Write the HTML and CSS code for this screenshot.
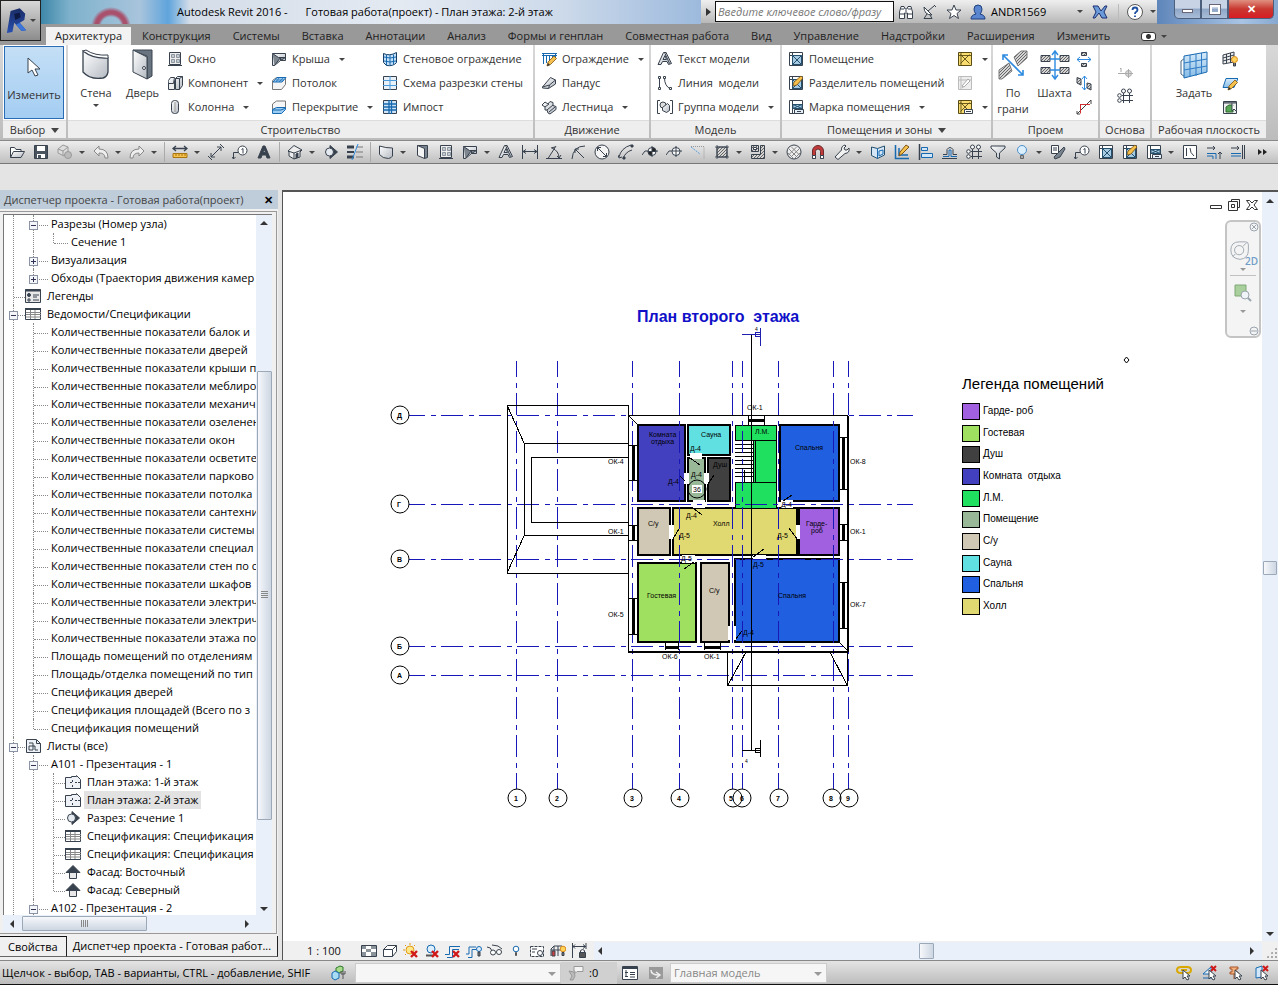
FILE: index.html
```html
<!DOCTYPE html>
<html lang="ru">
<head>
  <meta charset="UTF-8">
  <meta name="viewport" content="width=device-width, initial-scale=1.0">
  <title>Autodesk Revit 2016</title>
  <link rel="stylesheet" href="styles.css">
</head>
<body>

  <!-- Icon sprite -->
  <svg class="sprite" aria-hidden="true">
    <defs>
      <linearGradient id="steel" x1="0" y1="0" x2="1" y2="1"><stop offset="0" stop-color="#fff"/><stop offset="1" stop-color="#b4bac2"/></linearGradient>
      <linearGradient id="navy" x1="0" y1="0" x2="0" y2="1"><stop offset="0" stop-color="#1a2c66"/><stop offset="1" stop-color="#2850b0"/></linearGradient>
      <linearGradient id="sky" x1="0" y1="0" x2="0" y2="1"><stop offset="0" stop-color="#d8ecfa"/><stop offset="1" stop-color="#86bbe6"/></linearGradient>
      <pattern id="hatch" width="3" height="3" patternUnits="userSpaceOnUse"><path d="M0 0h3v3H0z" fill="#d4d4d4" stroke="none"/><path d="M0 3L3 0" stroke="#666" stroke-width="1"/></pattern>
    </defs>
    <symbol id="cursor" viewBox="0 0 16 22"><path d="M2 2v15l4-3 3 6 3-1-3-6h5z" fill="#fff"/></symbol>
    <symbol id="pointer" viewBox="0 0 16 16"><path d="M7 5v9l2-2 2 3 2-1-2-3h3z" fill="#fff"/></symbol>
    <symbol id="bigwall" viewBox="0 0 30 32"><path d="M2 2q10 8 25 7v14q-1 5-5 6Q9 31 2 23z" fill="url(#steel)" stroke-width="1.300"/><path d="M2 2l3-1q9 6 22 5v3" fill="#fff"/></symbol>
    <symbol id="bigdoor" viewBox="0 0 24 32"><path d="M2 1h19v26l-5 3V7L3 2z" fill="#687480"/><path d="M2 1l14 7v22L2 23z" fill="url(#steel)"/><circle cx="13" cy="19" r="1.500" fill="#fff"/></symbol>
    <symbol id="window" viewBox="0 0 16 16"><path d="M2.500 1.500h11v12h-11z" fill="#eee"/><path d="M4.500 3.500h3v3h-3zM9.500 3.500h3v3h-3zM4.500 8.500h3v3h-3zM9.500 8.500h3v3h-3z" fill="#c4ccd4" stroke="#7a848e" stroke-width=".8"/><path d="M1 14.500h14"/></symbol>
    <symbol id="component" viewBox="0 0 16 16"><path d="M1.500 5.500h6v9h-6z" fill="#eee"/><path d="M1.500 5.500l2-3h4l-1 6H2M8.500 3.500l2-2h5v9l-3 4h-4z" fill="url(#steel)"/><path d="M8.500 3.500h4v11M12.500 3.500l3-2"/></symbol>
    <symbol id="column" viewBox="0 0 16 16"><rect x="4.500" y="1.500" width="7" height="13" rx="3" fill="url(#steel)"/><path d="M8 3v10" stroke="#999"/></symbol>
    <symbol id="roof" viewBox="0 0 16 16"><path d="M1.500 2.500h13v7h-5l-6 5h-2z" fill="url(#steel)"/><path d="M1.500 2.500l6 4h7l-5 3v-3l-6 8" fill="#7d868f"/></symbol>
    <symbol id="ceiling" viewBox="0 0 16 16"><path d="M1.500 14.500v-9l4-3h9v7l-4 5z" fill="#f4f4f4" stroke="#777"/><path d="M2 7l4-4.500h9L11 7z" fill="#9cccf2" stroke="#1769b0"/><path d="M5 5h8M8 3L5 7M12 3L8 7" stroke="#1769b0" stroke-width=".7"/></symbol>
    <symbol id="floor" viewBox="0 0 16 16"><path d="M1.500 11V5l4-3h9v7" fill="#f6f6f6" stroke="#777"/><path d="M1.500 14.500v-4l4-2h9v2l-4 4z" fill="#9cccf2" stroke="#1769b0"/><path d="M2 11h8l5-2" stroke="#1769b0"/></symbol>
    <symbol id="curtain" viewBox="0 0 16 16"><path d="M1.500 2.500q6 3 13-1v10q-3 4-10 3l-3-3z" fill="#c4e0f6" stroke="#153e66"/><path d="M4.500 4v10.500M8 4v10.500M11.500 3.500v10M2 6q6 2 12 0M2 10q6 2 12 0" stroke="#1769b0"/></symbol>
    <symbol id="curtaingrid" viewBox="0 0 16 16"><path d="M1.500 1.500h13v13h-13z" fill="#e8f0f8"/><path d="M8 1v14M1 5.500h14M1 10.500h14" stroke="#4b9bdc"/></symbol>
    <symbol id="mullion" viewBox="0 0 16 16"><path d="M1.500 1.500h13v13h-13z" fill="#cfe4f6"/><path d="M7 1v14M9.500 1v14M1 5h14M1 8h14M1 11h14" stroke="#1769b0" stroke-width="1.300"/></symbol>
    <symbol id="pencil" viewBox="0 0 16 16"><path d="M6 15l1-4 6-6 2.500 2.500-6 6z" fill="#f6c04c" stroke="#7d5312" stroke-width=".8"/><path d="M6 15l1-3 2 2z" fill="#333" stroke="none"/></symbol>
    <symbol id="railing" viewBox="0 0 16 16"><path d="M1 2.500h15M1 4.500h15M2.500 2v11M5.500 4v8M8.500 4v8M11.500 4v4M14.500 2v5" stroke="#1769b0"/><use href="#pencil"/></symbol>
    <symbol id="ramp" viewBox="0 0 16 16"><path d="M1.500 12l8-9.500 5 2.500v4l-7 4.500-6-.5z" fill="url(#steel)"/><path d="M1.500 12l7-2 6-5M8.500 10l-1 3.500"/></symbol>
    <symbol id="stair" viewBox="0 0 16 16"><path d="M1 6l3-3 3 2 2-2.500 3 1v3l3 1v3l-6 4.500-2-1-1-3H4V8z" fill="url(#steel)"/><path d="M4 8l4-3M6 11l6-5M8 13l6-5"/></symbol>
    <symbol id="mtext" viewBox="0 0 16 16"><path d="M1 13.500L6.500 1.500H9l5.500 11-3 1-1.500-3H5.500l-1.500 3z" fill="url(#steel)"/><path d="M6 8.500l2-4 1.500 4zM9 1.500l-1 1 4.500 10"/></symbol>
    <symbol id="mline" viewBox="0 0 16 16"><path d="M2.500 3v10M7.500 3q0 8 6 11"/><path d="M1.500 1.500h2v2h-2zM1.500 12.500h2v2h-2zM6.500 1.500h2v2h-2zM12.500 12.500h2v2h-2z" fill="#fff"/></symbol>
    <symbol id="mgroup" viewBox="0 0 16 16"><path d="M3 1.500H.5v13H3M13 1.500h2.500v13H13"/><circle cx="6" cy="6" r="3" fill="#ddd"/><path d="M5.500 8.500l5-4 2 2v5l-3 2-4-2z" fill="url(#steel)"/></symbol>
    <symbol id="room" viewBox="0 0 16 16"><path d="M1.500 14.500v-13h13v13zM4.500 1.500v3M1.500 4.500h3M4.500 7v7" fill="#fff"/><path d="M4.500 4.500h9v9h-9zM4.500 4.500l9 9M13.500 4.500l-9 9" fill="#a8cbe4" stroke="#24506e"/></symbol>
    <symbol id="roomsep" viewBox="0 0 16 16"><use href="#room"/><path d="M5 11l1-4 7-6 2 2-6 7z" fill="#f6c04c" stroke="#7d5312" stroke-width=".8"/></symbol>
    <symbol id="roomtag" viewBox="0 0 16 16"><path d="M1.500 14.500v-13h13v13zM4.500 1.500v13" fill="#fff"/><path d="M5 5.500h9v4H5zM5 5.500l9 4M14 5.500l-9 4" fill="#a8cbe4" stroke="#24506e"/><path d="M6.500 10.500h9v4h-9z" fill="#e4eef6"/><path d="M9 12.500h4"/></symbol>
    <symbol id="area" viewBox="0 0 16 16"><path d="M1.500 1.500h13v13h-13z" fill="#f8dc70" stroke="#5a4c14"/><path d="M3.500 3.500l9 9M12.500 3.500l-9 9M1 4.500h14M4 1v14" stroke="#5a4c14" stroke-width=".9"/></symbol>
    <symbol id="areasep" viewBox="0 0 16 16"><path d="M1.500 1.500h13v13h-13zM4 1v14M1 5h14M5 13l8-8" stroke="#bbb" fill="#eee"/><path d="M5 11l6-7 2 2-6 6z" stroke="#aaa" fill="#fff"/></symbol>
    <symbol id="areatag" viewBox="0 0 16 16"><use href="#area"/><path d="M7.500 10.500h8v4h-8z" fill="#fff"/><path d="M9 12.500h5"/></symbol>
    <symbol id="byface" viewBox="0 0 30 30"><path d="M1 20L11 13l3 8-10 8H1z" fill="url(#hatch)" stroke="#777"/><path d="M16 7l7-6h6v7l-9 8z" fill="url(#hatch)" stroke="#777"/><path d="M5 5l20 20M5 10V5h5M20 25h5v-5" stroke="#2e8be0" stroke-width="1.600"/></symbol>
    <symbol id="shaft" viewBox="0 0 30 30"><path d="M1 5.500h9v6H1zM20 5.500h9v6h-9zM1 17.500h9v6H1zM20 17.500h9v6h-9z" fill="url(#hatch)"/><path d="M15 1v28M12 5l3-4 3 4M12 25l3 4 3-4M10 9h10M10 20h10" stroke="#2e8be0" stroke-width="1.400"/></symbol>
    <symbol id="opwall" viewBox="0 0 16 16"><path d="M5.500 1.500h5v3h-5zM5.500 12.500h5v3h-5z" fill="url(#hatch)"/><path d="M1 8.500h14M4 6L1 8.500 4 11M12 6l3 2.500-3 2.500" stroke="#2e8be0"/></symbol>
    <symbol id="opvert" viewBox="0 0 16 16"><path d="M1 2.500l4 1.500v6L1 8zM11 8l4 1v6l-4-2z" fill="url(#hatch)"/><path d="M8.500 1v14M6 4l2.500-3L11 4M6 12l2.500 3 2.500-3" stroke="#2e8be0"/></symbol>
    <symbol id="dormer" viewBox="0 0 16 16"><path d="M1 15L15 1M15 5v-4M1 12v3h3" stroke="#444"/><path d="M4 5.500h10M4.500 5.500v9" stroke="#d03030"/></symbol>
    <symbol id="level" viewBox="0 0 16 16"><path d="M1 9.500h7M3 5l1-1v4" stroke="#aaa"/><circle cx="11.500" cy="9.500" r="3" stroke="#aaa" fill="#ddd"/><path d="M11.500 5v9M7 9.500h9" stroke="#aaa"/></symbol>
    <symbol id="grid" viewBox="0 0 16 16"><path d="M6.500 5v10M12.500 5v10M5 7.500h11M5 12.500h11"/><circle cx="6.500" cy="3" r="2" fill="#fff"/><circle cx="12.500" cy="3" r="2" fill="#fff"/><circle cx="2.500" cy="7.500" r="1.800" fill="#fff"/><circle cx="2.500" cy="12.500" r="1.800" fill="#fff"/></symbol>
    <symbol id="set" viewBox="0 0 30 30"><path d="M2 11l4-3v19l-4-3z" fill="#fff" stroke="#49657f"/><path d="M5 6l23-4v20L5 28z" fill="url(#sky)" stroke="#1769b0"/><path d="M11 5v22M17 4v22M22.500 3v20M5 13l23-4M5 20l23-4" stroke="#2e7bc4"/></symbol>
    <symbol id="show" viewBox="0 0 16 16"><path d="M1 4l11-3v10L1 13zM4.500 3v9M8.500 2v10M1 7l11-3M1 10l11-3" fill="#eee"/><circle cx="12.500" cy="8.500" r="3" fill="#ffd35c" stroke="#d88a18"/><path d="M11.500 12v3h2v-3" fill="#777"/></symbol>
    <symbol id="refplane" viewBox="0 0 16 16"><path d="M4 3.500h12l-4 9H1z" fill="url(#sky)" stroke="#1769b0"/><use href="#pencil"/></symbol>
    <symbol id="viewer" viewBox="0 0 16 16"><path d="M1.500 2.500h13v12h-13z" fill="#eee"/><path d="M2 4h12M2 3h12"/><path d="M4 8l3-2h4v7H4z" fill="#58a858" stroke="#2d6a2d"/><path d="M10 4v8l2-2 3 3" fill="#fff"/></symbol>

    <symbol id="open" viewBox="0 0 16 16"><path d="M1.500 13.500v-10h4l1.500 2h5v2" fill="#fff"/><path d="M1.500 13.500l3-6h11l-3.500 6z" fill="url(#steel)"/></symbol>
    <symbol id="save" viewBox="0 0 16 16"><path d="M1.500 1.500h13v13h-13z" fill="#4a545e"/><path d="M4 2h8v5H4zM4 10h8v4H4z" fill="#fff" stroke="none"/><path d="M5 11h3v3H5z" fill="#4a545e" stroke="none"/></symbol>
    <symbol id="sync" viewBox="0 0 16 16"><path d="M1 5l5-4 5 2v5L7 12 1 9zM1 5l5 2 5-4M6 7v5" stroke="#999" fill="#ddd"/><circle cx="11" cy="11" r="3.500" fill="#bbb" stroke="#999"/></symbol>
    <symbol id="undo" viewBox="0 0 16 16"><path d="M1 7l5-5v3q9 0 9 9h-3q0-5-6-5v3z" fill="#eee" stroke="#888"/></symbol>
    <symbol id="redo" viewBox="0 0 16 16"><path d="M15 7l-5-5v3Q1 5 1 14h3q0-5 6-5v3z" fill="#eee" stroke="#888"/></symbol>
    <symbol id="measure" viewBox="0 0 16 16"><path d="M1 4.500h14M4 2L1 4.500 4 7M12 2l3 2.500L12 7" stroke-width="1.300"/><path d="M1 9.500h14v4H1z" fill="#f6c34c" stroke="#a87410"/><path d="M4 10v2M7 10v2M10 10v2M13 10v2" stroke="#a87410"/></symbol>
    <symbol id="dim" viewBox="0 0 16 16"><path d="M3 13L13 3M9 3h4v4M3 9v4h4M12 0l4 4M0 12l4 4"/></symbol>
    <symbol id="tag" viewBox="0 0 16 16"><path d="M1.500 15V8.500h5M0 13l1.500 2 2-2"/><circle cx="10.500" cy="6.500" r="4.500" fill="#fff"/><path d="M9.500 5.500l1.500-1v5"/></symbol>
    <symbol id="bold-a" viewBox="0 0 16 16"><path d="M2 14L7 2h2l5 12h-3l-1-3H6l-1 3zM7 8.500h2.500L8 5z" fill="#38424e" fill-rule="evenodd"/></symbol>
    <symbol id="home" viewBox="0 0 16 16"><path d="M1 7l6-5.500 8 4.500-2 2v5l-6 2-5-3V8z" fill="#eee"/><path d="M1 7l6 2 8-3M7 9v6"/><path d="M9 10l2-1v4l-2 1z" fill="#38424e"/></symbol>
    <symbol id="section" viewBox="0 0 16 16"><path d="M7 1.500L14.500 8 7 14.500z" fill="#38424e"/><circle cx="6.500" cy="8" r="4" fill="#e4eaf0"/></symbol>
    <symbol id="thin" viewBox="0 0 16 16"><path d="M0 3h7M0 13h7" stroke-width="3"/><path d="M0 8h7" stroke-width="2"/><path d="M9 3h7M9 8h7M9 13h7" stroke="#777"/><path d="M11 0L5 16" stroke="#2e8be0"/></symbol>
    <symbol id="wall" viewBox="0 0 16 16"><path d="M1.500 2q6 2 13 2v8q-1 2-4 2.500-6 0-9-4z" fill="url(#steel)"/></symbol>
    <symbol id="door" viewBox="0 0 16 16"><path d="M3.500 1.500h10v12l-3 1z" fill="#7a848e"/><path d="M3.500 1.500l7 3v10l-7-3z" fill="#f4f4f4"/></symbol>
    <symbol id="dimlin" viewBox="0 0 16 16"><path d="M.5 1v14M15.500 1v14M1 7.500h14M4 5.500L1 7.500l3 2M12 5.500l3 2-3 2"/></symbol>
    <symbol id="angle" viewBox="0 0 16 16"><path d="M0 14.500h16M2 14.500L10 2M6 4q7 3 7 10M5 4l4-1M11 12l2 2 2-3"/></symbol>
    <symbol id="radial" viewBox="0 0 16 16"><path d="M15 2Q3 2 2 15M14 14L5 5M9 5H5v4"/></symbol>
    <symbol id="diameter" viewBox="0 0 16 16"><circle cx="8" cy="8" r="7" fill="#f4f4f4"/><path d="M3.500 3.500l9 9M7 3.500H3.500V7M12.500 9v3.500H9"/></symbol>
    <symbol id="arc" viewBox="0 0 16 16"><path d="M1 13Q3 4 13 1M5 15q2-7 9-9M0 11l1 3 3-1"/><path d="M13 1h2v2h-2zM5 13h2v2H5z" fill="#38424e"/></symbol>
    <symbol id="spot" viewBox="0 0 16 16"><path d="M0 11l3-4h13M10 2v11"/><circle cx="10" cy="7.500" r="4" fill="#fff"/><path d="M10 3.500v4h4a4 4 0 0 0-4-4M10 11.500v-4H6a4 4 0 0 0 4 4" fill="#222"/></symbol>
    <symbol id="spotxy" viewBox="0 0 16 16"><circle cx="10" cy="7.500" r="4" fill="#fff"/><path d="M0 11l3-4h13M10 2v11"/></symbol>
    <symbol id="detline" viewBox="0 0 16 16"><path d="M1 3l9 7" stroke="#58a0dc" stroke-dasharray="2 1"/><path d="M1 2.500h13v12" stroke="#999" stroke-dasharray="1 1"/></symbol>
    <symbol id="region" viewBox="0 0 16 16"><path d="M3 3h10v10H3z" fill="url(#hatch)"/><path d="M1 3h14M1 13h14M3 1v14M13 1v14" stroke-width=".8"/></symbol>
    <symbol id="fill" viewBox="0 0 16 16"><path d="M1.500 1.500h7v6h-7zM10.500 1.500h4v13h-13v-4h9z" fill="url(#hatch)"/><path d="M3.500 3.500h3v2h-3z" fill="#fff"/></symbol>
    <symbol id="material" viewBox="0 0 16 16"><circle cx="8" cy="8" r="7" fill="#eee"/><path d="M3 5l8 8M5 2.500l8.500 8.500M2 9l5 5M13 5l-8 8M11 2.500L2.500 11M14 9l-5 5" stroke="#888"/></symbol>
    <symbol id="magnet" viewBox="0 0 16 16"><path d="M2.500 14.500V7a5.500 5.500 0 0 1 11 0v7.500h-3V7.500a2.500 2.500 0 0 0-5 0v7z" fill="#c23a3a" stroke="#6a2a2a"/><path d="M2.500 11.500h3v3h-3zM10.500 11.500h3v3h-3z" fill="#fff"/></symbol>
    <symbol id="wrench" viewBox="0 0 16 16"><path d="M1 13l6.500-7Q7 2 11 1l1 1-2 2 1 2 2 0 2-2q1 5-4 5.500L4 15.500z" fill="#f2f2f2"/></symbol>
    <symbol id="opening" viewBox="0 0 16 16"><path d="M1.500 3l6 1.500 7-2.500v9l-7 3.500-6-3z" fill="#d4e6f6" stroke="#24506e"/><path d="M7.500 4.500v10M9 7l4-1v4l-4 2z" stroke="#1769b0"/></symbol>
    <symbol id="drafting" viewBox="0 0 16 16"><path d="M1.500 1v13.500H15M5 4v7h9" stroke="#1769b0" stroke-width="1.500"/><path d="M5 12l1-4 6-7 3 2-7 7z" fill="#f6c04c" stroke="#7d5312"/></symbol>
    <symbol id="align" viewBox="0 0 16 16"><path d="M1.500 0v16" stroke-width="1.500"/><path d="M3.500 3.500h6v3h-6zM3.500 9.500h11v4h-11z" fill="#d2e6f8" stroke="#1769b0"/></symbol>
    <symbol id="offset" viewBox="0 0 16 16"><path d="M0 14.500h15M1 10.500h4v-5q3-4 6 0v5h4"/><path d="M1 12.500h6V6h2v6.500h6" stroke="#1769b0"/></symbol>
    <symbol id="filter" viewBox="0 0 16 16"><path d="M1 2h14v2l-5.500 5v6l-3-2V9L1 4z" fill="url(#steel)"/></symbol>
    <symbol id="bulb" viewBox="0 0 16 16"><circle cx="8" cy="6" r="4.500" fill="#dcefff" stroke="#4a90cc"/><path d="M6.500 11.500h3v3h-3z" fill="#aaa" stroke="#666"/></symbol>
    <symbol id="match" viewBox="0 0 16 16"><path d="M1.500 1.500h7v8h-7zM3 4h4M3 6h4" fill="#fff"/><path d="M14 3L8 9l-4 4 1 2 5-2 5-8z" fill="#7a848e"/></symbol>
    <symbol id="linebox" viewBox="0 0 16 16"><path d="M1.500 1.500h13v13h-13z" fill="#fff"/><path d="M4.500 4v8M8 4q0 5 4 8"/></symbol>
    <symbol id="trim" viewBox="0 0 16 16"><path d="M1 4h8M7 2l2 2-2 2M14 8v7M12 10l2-2 2 2"/><path d="M1 9.500h9V15M1 12h6v3" stroke="#1769b0"/></symbol>
    <symbol id="extend" viewBox="0 0 16 16"><path d="M1 4h8M7 2l2 2-2 2M14.500 1v14M12.500 1v14"/><path d="M1 9.500h10M1 12h10" stroke="#1769b0"/></symbol>
    <symbol id="more" viewBox="0 0 16 16"><path d="M4 5l4 3-4 3zM9 5l4 3-4 3z" fill="#222" stroke="none"/></symbol>

    <symbol id="binoc" viewBox="0 0 16 16"><path d="M1.500 14.500V8L3 2.500h3L7 5h2l1-2.500h3L14.500 8v6.500h-5V9h-3v5.500z" fill="#fff"/><path d="M2 10h4M10 10h4M3 5h3M10 5h3M7 7h2"/></symbol>
    <symbol id="dish" viewBox="0 0 16 16"><path d="M2 3q0 8 8 8z" fill="#fff"/><path d="M2 3l8 8M6 7l6-5M12 1l2 2M5 10l-3 4.500h8L8 11"/></symbol>
    <symbol id="star" viewBox="0 0 16 16"><path d="M8 1l2 5h5l-4 3.500 1.500 5L8 11.500l-4.500 3 1.500-5L1 6h5z" fill="#fff"/></symbol>
    <symbol id="user" viewBox="0 0 16 16"><path d="M1 15q0-4 5-5Q4 8 4 5q0-4 4-4t4 4q0 3-2 5 5 1 5 5z" fill="#5a86d0" stroke="#1d3f7e"/></symbol>
    <symbol id="exchange" viewBox="0 0 16 16"><path d="M1 2h5l3 5 4-5h2l-3 6 3 6h-5L7 9l-4 5H1l3-6z" fill="#6a9ada" stroke="#1c2f70"/></symbol>
    <symbol id="help" viewBox="0 0 16 16"><circle cx="8" cy="8" r="7.500" fill="#fff" stroke="#555"/><path d="M5.500 6q0-2.500 2.500-2.500T10.500 6q0 1-1.500 2-1 .5-1 2M8 11.500v1.500" stroke="#1d4fa0" stroke-width="1.800"/></symbol>
    <symbol id="logo" viewBox="0 0 24 28"><path d="M5 3l10-3 6 6-1 7-5 3 7 8-5 1-8-9-2 10-6 1z" fill="url(#navy)" stroke="none"/><path d="M9 6l6-1 1 5-6 3z" fill="#0e1a44" stroke="none"/><path d="M15 16l7 8-5 1-6-7z" fill="#3c74d8" stroke="none"/></symbol>

    <symbol id="legend" viewBox="0 0 16 16"><path d="M.5 1.500h15v13H.5z" fill="#e8e8e8"/><path d="M0 2.500h16" stroke-width="2"/><circle cx="4" cy="7" r="1.500" fill="#38424e"/><path d="M3 11h2v2H3zM8 7h6M8 9h4M8 12h6"/></symbol>
    <symbol id="schedule" viewBox="0 0 16 16"><path d="M.5 2.500h15v11H.5z" fill="#fff"/><path d="M5.500 4v9M1 6.500h15M1 8.500h15M1 11h15M10 4v9" stroke="#888"/><path d="M0 3h16" stroke-width="2"/></symbol>
    <symbol id="sheets" viewBox="0 0 16 16"><path d="M1.500 1.500h10l4 4v9h-14z" fill="#eef2f6"/><path d="M11.500 2v3.500h4M4 5h4v7H4v-4h6v4h3"/></symbol>
    <symbol id="plan" viewBox="0 0 16 16"><path d="M.5 3.500h6v-1h5v-1l4 4v9H.5z" fill="#eef2f6"/><path d="M5 8.500h3M7.500 6v3M10 8.500h5M7.500 11v3" stroke-dasharray="2 1"/></symbol>
    <symbol id="facade" viewBox="0 0 16 16"><path d="M4.500 8h7v6.500h-7z" fill="#e8e8e8"/><path d="M8 1.500l7 7H1z" fill="#38424e"/></symbol>

    <symbol id="detail" viewBox="0 0 16 16"><path d="M.5 2.500h15v11H.5z" fill="#fff"/><path d="M1 3h4v3H1zM10 3h5v3h-5zM5 6h5v3H5zM1 9h4v4H1zM10 9h5v4h-5z" fill="#8a929a" stroke="none"/></symbol>
    <symbol id="box" viewBox="0 0 16 16"><path d="M1.500 6.500l4-4h9v6l-4 5h-9z" fill="#fff"/><path d="M1.500 6.500h9v7M10.500 6.500l4-4"/></symbol>
    <symbol id="redx" viewBox="0 0 16 16"><path d="M8 8l6 6M14 8l-6 6" stroke="#d01818" stroke-width="2.400"/></symbol>
    <symbol id="sun" viewBox="0 0 16 16"><circle cx="7" cy="7" r="4" fill="#ffe88a" stroke="#e09a18"/><path d="M7 0v2M0 7h2M2 2l1 1M12 2l-1 1M2 12l1-1" stroke="#e09a18"/><use href="#redx"/></symbol>
    <symbol id="shadow" viewBox="0 0 16 16"><circle cx="7" cy="6" r="4" fill="#dcefff" stroke="#1769b0"/><path d="M2 12.500h8" stroke="#555" stroke-width="2"/><use href="#redx"/></symbol>
    <symbol id="cropx" viewBox="0 0 16 16"><path d="M0 11.500h4.500v-8H15M2 14.500h5.500v-8H14" stroke="#1769b0"/><use href="#redx"/></symbol>
    <symbol id="croplamp" viewBox="0 0 16 16"><path d="M0 11h3V4h7M2 14.500h4v-8h4" stroke="#1769b0"/><circle cx="13" cy="6" r="2.500" fill="#dcefff" stroke="#1769b0"/><path d="M12 9h2v4h-2z" fill="#777"/></symbol>
    <symbol id="glasses" viewBox="0 0 16 16"><path d="M0 4q4 0 5 4M5 2q7 0 10 4"/><circle cx="6" cy="9.500" r="2.500" fill="#fff"/><circle cx="12" cy="9" r="2.500" fill="#fff"/></symbol>
    <symbol id="lamp" viewBox="0 0 16 16"><circle cx="8" cy="6" r="2.800" fill="#fff" stroke="#1769b0"/><path d="M7.500 9.500h1v3h-1z" fill="#999" stroke="#555"/></symbol>
    <symbol id="template" viewBox="0 0 16 16"><path d="M1.500 3.500h13v10h-13z" stroke-dasharray="3 1" fill="#fff"/><circle cx="11" cy="10" r="2.500" fill="#fff"/><path d="M3 6h5M3 9h3"/></symbol>
    <symbol id="analytic" viewBox="0 0 16 16"><path d="M1 13V6l3-3h8M1 7h10M4 3v10M8 3v10"/><path d="M2 8h3v5H2z" fill="#d04040"/><circle cx="13" cy="6" r="2.800" fill="#ffd35c" stroke="#d88a18"/><path d="M12 9.500h2v3h-2z" fill="#777"/></symbol>
    <symbol id="lockdim" viewBox="0 0 16 16"><path d="M1.500 0v15M15 0v6M2 3.500h13M4 1.500L2 3.500l2 2M12 1.500l2.500 2-2.500 2"/><path d="M8.500 9.500h6v5h-6z" fill="#555"/><path d="M9.500 9V7.500q2-2 4 0V9"/></symbol>
    <symbol id="workset" viewBox="0 0 16 16"><path d="M5 3l4-2 3 1v4l-4 2-3-2z" fill="#a8dc8c" stroke="#2e7a2a"/><path d="M1 8l3-2 4 2v5l-4 2-3-2z" fill="#a8dcf4" stroke="#1769b0"/><path d="M12 6v8M10 6v3h4V6" stroke="#555"/></symbol>
    <symbol id="editreq" viewBox="0 0 16 16"><path d="M6 1.500h9v5H9l-2 2V6H6z" fill="#f4f4f4" stroke="#999"/><path d="M1 6l5 1 1 4-2 4H2l2-4z" fill="#bbb" stroke="#999"/></symbol>
    <symbol id="options" viewBox="0 0 16 16"><path d="M.5 1.500h15v13H.5z" fill="#fff"/><path d="M0 3h16" stroke-width="2"/><path d="M3 7.500h3M8 7.500h5M3 11.500h3M8 9.500h5M8 12h5M4 5v7"/></symbol>
    <symbol id="addopt" viewBox="0 0 16 16"><path d="M1 2h14v12H1z" fill="#9a9a9a" stroke="none"/><path d="M3 5q0 5 8 5M8 7l4 3-4 3" stroke="#eee" stroke-width="1.500"/></symbol>
    <symbol id="links" viewBox="0 0 16 16"><path d="M1 5q0-3 4-3h6q4 0 4 3t-4 3H5Q1 8 1 5zM5 5h6" stroke="#d8a800" stroke-width="2"/><use href="#pointer"/></symbol>
    <symbol id="underlay" viewBox="0 0 16 16"><path d="M1 9l8-7v7zM1 13h9" fill="#eaf4fc" stroke="#1769b0"/><path d="M9 1l5 5M14 1L9 6" stroke="#d01818" stroke-width="2"/><use href="#pointer"/></symbol>
    <symbol id="pinned" viewBox="0 0 16 16"><path d="M2 2h8v2H8v3h2v2H2V7h2V4H2zM6 9v5" fill="#f4b07c" stroke="#a8542a"/><use href="#pointer"/></symbol>
    <symbol id="faces" viewBox="0 0 16 16"><path d="M2 3l6-2v11l-6 1z" fill="#d2e8fa" stroke="#1769b0"/><path d="M9 1l5 5M14 1L9 6" stroke="#d01818" stroke-width="2"/><use href="#pointer"/></symbol>
  </svg>

  <!-- Title bar -->
  <header class="titlebar">
    <button class="app-button" aria-label="Меню приложения"><svg class="logo"><use href="#logo"/></svg><i class="caret"></i></button>
    <h1 class="app-title"><span>Autodesk Revit 2016 -</span><span>Готовая работа(проект) - План этажа: 2-й этаж</span></h1>
    <div class="infocenter">
      <button class="info-toggle" aria-label="Свернуть"><i class="caret-right"></i></button>
      <input class="search" type="text" aria-label="Поиск" placeholder="Введите ключевое слово/фразу">
      <button class="info-btn" aria-label="Найти"><svg class="icon"><use href="#binoc"/></svg></button>
      <button class="info-btn" aria-label="Центр связи"><svg class="icon"><use href="#dish"/></svg></button>
      <button class="info-btn" aria-label="Избранное"><svg class="icon"><use href="#star"/></svg></button>
      <button class="user-btn"><svg class="icon"><use href="#user"/></svg><span>ANDR1569</span><i class="caret"></i></button>
      <button class="info-btn exchange" aria-label="Exchange"><svg class="icon"><use href="#exchange"/></svg></button>
      <button class="help-btn" aria-label="Справка"><svg class="icon"><use href="#help"/></svg><i class="caret"></i></button>
    </div>
    <div class="window-buttons">
      <button class="win-min" aria-label="Свернуть окно"><i></i></button>
      <button class="win-max" aria-label="Развернуть окно"><i></i></button>
      <button class="win-close" aria-label="Закрыть">✕</button>
    </div>
  </header>

  <!-- Ribbon tabs -->
  <nav class="tabs">
    <a class="active" href="#">Архитектура</a>
    <a href="#">Конструкция</a>
    <a href="#">Системы</a>
    <a href="#">Вставка</a>
    <a href="#">Аннотации</a>
    <a href="#">Анализ</a>
    <a href="#">Формы и генплан</a>
    <a href="#">Совместная работа</a>
    <a href="#">Вид</a>
    <a href="#">Управление</a>
    <a href="#">Надстройки</a>
    <a href="#">Расширения</a>
    <a href="#">Изменить</a>
    <button class="ribbon-toggle" aria-label="Свернуть ленту"><i class="pill"></i><i class="caret"></i></button>
  </nav>

  <!-- Ribbon -->
  <section class="ribbon">
    <div class="panel p-select">
      <div class="panel-body">
        <button class="big modify"><svg class="cursor"><use href="#cursor"/></svg><span>Изменить</span></button>
      </div>
      <h2>Выбор <i class="caret wide"></i></h2>
    </div>

    <div class="panel p-build">
      <div class="panel-body">
        <button class="big"><svg class="icon-lg"><use href="#bigwall"/></svg><span>Стена</span><i class="caret"></i></button>
        <button class="big"><svg class="icon-lg"><use href="#bigdoor"/></svg><span>Дверь</span></button>
        <div class="col">
          <button><svg class="icon"><use href="#window"/></svg>Окно</button>
          <button><svg class="icon"><use href="#component"/></svg>Компонент<i class="caret"></i></button>
          <button><svg class="icon"><use href="#column"/></svg>Колонна<i class="caret"></i></button>
        </div>
        <div class="col">
          <button><svg class="icon"><use href="#roof"/></svg>Крыша<i class="caret"></i></button>
          <button><svg class="icon"><use href="#ceiling"/></svg>Потолок</button>
          <button><svg class="icon"><use href="#floor"/></svg>Перекрытие<i class="caret"></i></button>
        </div>
        <div class="col">
          <button><svg class="icon"><use href="#curtain"/></svg>Стеновое ограждение</button>
          <button><svg class="icon"><use href="#curtaingrid"/></svg>Схема разрезки стены</button>
          <button><svg class="icon"><use href="#mullion"/></svg>Импост</button>
        </div>
      </div>
      <h2>Строительство</h2>
    </div>

    <div class="panel p-move">
      <div class="panel-body">
        <div class="col">
          <button><svg class="icon"><use href="#railing"/></svg>Ограждение<i class="caret"></i></button>
          <button><svg class="icon"><use href="#ramp"/></svg>Пандус</button>
          <button><svg class="icon"><use href="#stair"/></svg>Лестница<i class="caret"></i></button>
        </div>
      </div>
      <h2>Движение</h2>
    </div>

    <div class="panel p-model">
      <div class="panel-body">
        <div class="col">
          <button><svg class="icon"><use href="#mtext"/></svg>Текст модели</button>
          <button><svg class="icon"><use href="#mline"/></svg>Линия&nbsp; модели</button>
          <button><svg class="icon"><use href="#mgroup"/></svg>Группа модели<i class="caret"></i></button>
        </div>
      </div>
      <h2>Модель</h2>
    </div>

    <div class="panel p-rooms">
      <div class="panel-body">
        <div class="col">
          <button><svg class="icon"><use href="#room"/></svg>Помещение</button>
          <button><svg class="icon"><use href="#roomsep"/></svg>Разделитель помещений</button>
          <button><svg class="icon"><use href="#roomtag"/></svg>Марка помещения<i class="caret"></i></button>
        </div>
        <div class="col">
          <button aria-label="Зона"><svg class="icon"><use href="#area"/></svg><i class="caret"></i></button>
          <button aria-label="Граница зоны" disabled><svg class="icon"><use href="#areasep"/></svg></button>
          <button aria-label="Марка зоны"><svg class="icon"><use href="#areatag"/></svg><i class="caret"></i></button>
        </div>
      </div>
      <h2>Помещения и зоны <i class="caret wide"></i></h2>
    </div>

    <div class="panel p-opening">
      <div class="panel-body">
        <button class="big"><svg class="icon-lg"><use href="#byface"/></svg><span>По<br>грани</span></button>
        <button class="big"><svg class="icon-lg"><use href="#shaft"/></svg><span>Шахта</span></button>
        <div class="col">
          <button aria-label="Стена"><svg class="icon"><use href="#opwall"/></svg></button>
          <button aria-label="По вертикали"><svg class="icon"><use href="#opvert"/></svg></button>
          <button aria-label="Слуховое окно"><svg class="icon"><use href="#dormer"/></svg></button>
        </div>
      </div>
      <h2>Проем</h2>
    </div>

    <div class="panel p-datum">
      <div class="panel-body">
        <div class="col">
          <button aria-label="Уровень" disabled><svg class="icon"><use href="#level"/></svg></button>
          <button aria-label="Ось"><svg class="icon"><use href="#grid"/></svg></button>
        </div>
      </div>
      <h2>Основа</h2>
    </div>

    <div class="panel p-plane">
      <div class="panel-body">
        <button class="big"><svg class="icon-lg"><use href="#set"/></svg><span>Задать</span></button>
        <div class="col">
          <button aria-label="Показать"><svg class="icon"><use href="#show"/></svg></button>
          <button aria-label="Опорная плоскость"><svg class="icon"><use href="#refplane"/></svg></button>
          <button aria-label="Просмотр"><svg class="icon"><use href="#viewer"/></svg></button>
        </div>
      </div>
      <h2>Рабочая плоскость</h2>
    </div>
  </section>

  <!-- Quick access toolbar -->
  <div class="toolbar" role="toolbar" aria-label="Быстрый доступ">
    <button aria-label="Открыть"><svg class="icon"><use href="#open"/></svg></button>
    <button aria-label="Сохранить"><svg class="icon"><use href="#save"/></svg></button>
    <button class="drop" aria-label="Синхронизация"><svg class="icon"><use href="#sync"/></svg><i class="caret"></i></button>
    <button class="drop" aria-label="Отменить"><svg class="icon"><use href="#undo"/></svg><i class="caret"></i></button>
    <button class="drop" aria-label="Повторить"><svg class="icon"><use href="#redo"/></svg><i class="caret"></i></button>
    <hr>
    <button class="drop" aria-label="Измерить"><svg class="icon"><use href="#measure"/></svg><i class="caret"></i></button>
    <button aria-label="Параллельный размер"><svg class="icon"><use href="#dim"/></svg></button>
    <button aria-label="Марка"><svg class="icon"><use href="#tag"/></svg></button>
    <button aria-label="Текст"><svg class="icon"><use href="#bold-a"/></svg></button>
    <hr>
    <button class="drop" aria-label="3D вид"><svg class="icon"><use href="#home"/></svg><i class="caret"></i></button>
    <button aria-label="Разрез"><svg class="icon"><use href="#section"/></svg></button>
    <button aria-label="Тонкие линии"><svg class="icon"><use href="#thin"/></svg></button>
    <hr>
    <button class="drop" aria-label="Стена"><svg class="icon"><use href="#wall"/></svg><i class="caret"></i></button>
    <button aria-label="Дверь"><svg class="icon"><use href="#door"/></svg></button>
    <button aria-label="Окно"><svg class="icon"><use href="#window"/></svg></button>
    <button class="drop" aria-label="Крыша"><svg class="icon"><use href="#roof"/></svg><i class="caret"></i></button>
    <button aria-label="Текст модели"><svg class="icon"><use href="#mtext"/></svg></button>
    <button aria-label="Линейный размер"><svg class="icon"><use href="#dimlin"/></svg></button>
    <button aria-label="Угловой размер"><svg class="icon"><use href="#angle"/></svg></button>
    <button aria-label="Радиус"><svg class="icon"><use href="#radial"/></svg></button>
    <button aria-label="Диаметр"><svg class="icon"><use href="#diameter"/></svg></button>
    <button aria-label="Длина дуги"><svg class="icon"><use href="#arc"/></svg></button>
    <button aria-label="Высотная отметка"><svg class="icon"><use href="#spot"/></svg></button>
    <button aria-label="Координаты точки"><svg class="icon"><use href="#spotxy"/></svg></button>
    <button aria-label="Линия детализации"><svg class="icon"><use href="#detline"/></svg></button>
    <button class="drop" aria-label="Область"><svg class="icon"><use href="#region"/></svg><i class="caret"></i></button>
    <button class="drop" aria-label="Цветовая область"><svg class="icon"><use href="#fill"/></svg><i class="caret"></i></button>
    <button aria-label="Материалы"><svg class="icon"><use href="#material"/></svg></button>
    <button aria-label="Привязки"><svg class="icon"><use href="#magnet"/></svg></button>
    <button class="drop" aria-label="Настройки"><svg class="icon"><use href="#wrench"/></svg><i class="caret"></i></button>
    <button aria-label="Проем"><svg class="icon"><use href="#opening"/></svg></button>
    <button aria-label="Чертежный вид"><svg class="icon"><use href="#drafting"/></svg></button>
    <button aria-label="Выровнять"><svg class="icon"><use href="#align"/></svg></button>
    <button aria-label="Сместить"><svg class="icon"><use href="#offset"/></svg></button>
    <button aria-label="Ось"><svg class="icon"><use href="#grid"/></svg></button>
    <button aria-label="Фильтр"><svg class="icon"><use href="#filter"/></svg></button>
    <button class="drop" aria-label="Скрыть"><svg class="icon"><use href="#bulb"/></svg><i class="caret"></i></button>
    <button aria-label="Копировать свойства"><svg class="icon"><use href="#match"/></svg></button>
    <button aria-label="Маркировать все"><svg class="icon"><use href="#tag"/></svg></button>
    <button aria-label="Помещение"><svg class="icon"><use href="#room"/></svg></button>
    <button aria-label="Разделитель"><svg class="icon"><use href="#roomsep"/></svg></button>
    <button class="drop" aria-label="Марка помещения"><svg class="icon"><use href="#roomtag"/></svg><i class="caret"></i></button>
    <button aria-label="Линия модели"><svg class="icon"><use href="#linebox"/></svg></button>
    <button aria-label="Обрезать"><svg class="icon"><use href="#trim"/></svg></button>
    <button aria-label="Удлинить"><svg class="icon"><use href="#extend"/></svg></button>
    <button aria-label="Еще"><svg class="icon"><use href="#more"/></svg></button>
  </div>

  <main class="workspace">

    <!-- Project browser -->
    <aside class="browser">
      <div class="browser-title"><h2>Диспетчер проекта - Готовая работа(проект)</h2><button aria-label="Закрыть панель">✕</button></div>
      <div class="browser-frame">
        <div class="tree-area">
          <ul class="tree">
            <li>
              <ul>
                <li><div class="row"><button class="exp" aria-label="Свернуть"></button><span>Разрезы (Номер узла)</span></div>
                  <ul><li><div class="row"><span>Сечение 1</span></div></li></ul>
                </li>
                <li><div class="row"><button class="exp plus" aria-label="Развернуть"></button><span>Визуализация</span></div></li>
                <li><div class="row"><button class="exp plus" aria-label="Развернуть"></button><span>Обходы (Траектория движения камер</span></div></li>
              </ul>
            </li>
            <li><div class="row pic"><svg class="icon"><use href="#legend"/></svg><span>Легенды</span></div></li>
            <li><div class="row pic"><button class="exp" aria-label="Свернуть"></button><svg class="icon"><use href="#schedule"/></svg><span>Ведомости/Спецификации</span></div>
              <ul>
                <li><div class="row"><span>Количественные показатели балок и</span></div></li>
                <li><div class="row"><span>Количественные показатели дверей</span></div></li>
                <li><div class="row"><span>Количественные показатели крыши п</span></div></li>
                <li><div class="row"><span>Количественные показатели меблиро</span></div></li>
                <li><div class="row"><span>Количественные показатели механич</span></div></li>
                <li><div class="row"><span>Количественные показатели озеленен</span></div></li>
                <li><div class="row"><span>Количественные показатели окон</span></div></li>
                <li><div class="row"><span>Количественные показатели осветите</span></div></li>
                <li><div class="row"><span>Количественные показатели парково</span></div></li>
                <li><div class="row"><span>Количественные показатели потолка</span></div></li>
                <li><div class="row"><span>Количественные показатели сантехни</span></div></li>
                <li><div class="row"><span>Количественные показатели системы</span></div></li>
                <li><div class="row"><span>Количественные показатели специал</span></div></li>
                <li><div class="row"><span>Количественные показатели стен по с</span></div></li>
                <li><div class="row"><span>Количественные показатели шкафов</span></div></li>
                <li><div class="row"><span>Количественные показатели электрич</span></div></li>
                <li><div class="row"><span>Количественные показатели электрич</span></div></li>
                <li><div class="row"><span>Количественные показатели этажа по</span></div></li>
                <li><div class="row"><span>Площадь помещений по отделениям</span></div></li>
                <li><div class="row"><span>Площадь/отделка помещений по тип</span></div></li>
                <li><div class="row"><span>Спецификация дверей</span></div></li>
                <li><div class="row"><span>Спецификация площадей (Всего по з</span></div></li>
                <li><div class="row"><span>Спецификация помещений</span></div></li>
              </ul>
            </li>
            <li><div class="row pic"><button class="exp" aria-label="Свернуть"></button><svg class="icon"><use href="#sheets"/></svg><span>Листы (все)</span></div>
              <ul>
                <li><div class="row"><button class="exp" aria-label="Свернуть"></button><span>A101 - Презентация - 1</span></div>
                  <ul>
                    <li><div class="row pic"><svg class="icon"><use href="#plan"/></svg><span>План этажа: 1-й этаж</span></div></li>
                    <li><div class="row pic"><svg class="icon"><use href="#plan"/></svg><span class="selected">План этажа: 2-й этаж</span></div></li>
                    <li><div class="row pic"><svg class="icon"><use href="#section"/></svg><span>Разрез: Сечение 1</span></div></li>
                    <li><div class="row pic"><svg class="icon"><use href="#schedule"/></svg><span>Спецификация: Спецификация</span></div></li>
                    <li><div class="row pic"><svg class="icon"><use href="#schedule"/></svg><span>Спецификация: Спецификация</span></div></li>
                    <li><div class="row pic"><svg class="icon"><use href="#facade"/></svg><span>Фасад: Восточный</span></div></li>
                    <li><div class="row pic"><svg class="icon"><use href="#facade"/></svg><span>Фасад: Северный</span></div></li>
                  </ul>
                </li>
                <li><div class="row"><button class="exp" aria-label="Свернуть"></button><span>A102 - Презентация - 2</span></div></li>
                <li></li>
              </ul>
            </li>
            <li></li>
          </ul>
          <div class="scroll-v"><i class="up"></i><i class="thumb"></i><i class="down"></i></div>
        </div>
        <div class="scroll-h"><i class="left"></i><i class="thumb"></i><i class="right"></i></div>
      </div>
      <div class="browser-tabs">
        <button>Свойства</button>
        <button class="current">Диспетчер проекта - Готовая работ...</button>
      </div>
    </aside>

    <!-- Drawing view -->
    <section class="view">
      <div class="canvas-row">
        <div class="canvas">
          <svg class="drawing" width="979" height="750" viewBox="283 192 979 750" shape-rendering="crispEdges" role="img" aria-label="План второго этажа">
            <!-- Room fills -->
            <g stroke="#000" stroke-width="2">
              <rect x="638" y="425" width="47" height="76" fill="#4340c0"/>
              <rect x="688" y="425" width="42" height="30" fill="#60e0e0"/>
              <rect x="688" y="458" width="17" height="43" fill="#98b898"/>
              <rect x="708" y="458" width="22" height="43" fill="#404040"/>
              <rect x="780" y="425" width="59" height="76" fill="#2060e0"/>
              <rect x="638" y="508" width="32" height="47" fill="#d0c8b4"/>
              <rect x="673" y="508" width="124" height="47" fill="#e0d870"/>
              <rect x="799" y="508" width="40" height="47" fill="#a060e0"/>
              <rect x="638" y="563" width="58" height="79" fill="#a0e060"/>
              <rect x="701" y="563" width="28" height="79" fill="#d0c8b4"/>
              <rect x="735" y="559" width="104" height="83" fill="#2060e0"/>
            </g>
            <path d="M735 425h41v83h-41z" fill="#20e060"/>
            <path d="M735 508v-83h41v83" fill="none" stroke="#000"/>
            <!-- Door openings -->
            <path d="M690 453h12v6h-12zM684 473h5v11h-5zM704 473h5v11h-5zM693 500h12v8h-12zM781 500h12v8h-12zM669 525h5v14h-5zM796 525h4v14h-4zM682 555h13v8h-13zM753 555h13v5h-13zM728 626h8v14h-8z" fill="#fff"/>
            <g fill="none" stroke="#000">
              <path d="M690 458l10 7M685 481l-6-6M708 484l6-9M693 508l9 7M783 501l9-6M673 539l6-10M797 539l-8-11M684 569l10-7M753 557l11-8M736 639l6-8"/>
            </g>
            <!-- Stairs -->
            <rect x="735" y="440" width="19" height="42" fill="#fff"/>
            <path d="M735 440.500h41M735 444.500h18M735 448.500h18M735 452.500h18M735 456.500h18M735 460.500h18M735 464.500h18M735 468.500h18M735 472.500h18M735 476.500h18M735 482.500h41M753.500 440v42M755.500 440v42M744.500 470v12" fill="none" stroke="#000"/>
            <!-- Grid axes -->
            <g fill="none" stroke="#1818b8" stroke-dasharray="22 6 5 5" stroke-dashoffset="6">
              <path d="M516.500 361v428"/><path d="M557.500 361v428"/><path d="M632.500 361v428"/><path d="M679.500 361v428"/><path d="M732.500 361v428"/><path d="M742.500 361v428"/><path d="M778.500 361v428"/><path d="M833.500 361v428"/><path d="M848.500 361v428"/>
              <path d="M409 415.500h504"/><path d="M409 504.500h504"/><path d="M409 559.500h504"/><path d="M409 646.500h504"/><path d="M409 675.500h504"/>
            </g>
            <!-- Roof, walls and porch -->
            <g fill="none" stroke="#000">
              <path d="M629 405.500H507.500v168H629M507 405l17 38M524 536l-17 37M628 443.500H524.500v92H628M628 457.500h-96.500v65H628M628.500 405v10"/>
              <path d="M628.500 415.500h219v236h-219zM629 416l9 9M839 642l9 9"/>
              <path d="M628 651.500h220M848 416v236" stroke-width="2"/>
              <path d="M727.500 652v33.500h120V652M728 685l18-33M847 685l-17-33"/>
              <path d="M629 445.500h8M629 480.500h8M629 525.500h8M629 540.500h8M629 598.500h8M629 634.500h8M840 437.500h8M840 489.500h8M840 524.500h8M840 540.500h8M840 582.500h8M840 628.500h8M748.500 416v9M764.500 416v9M665.500 643v7M678.500 643v7M704.500 643v7M720.500 643v7"/>
              <path d="M633 445v35M633 525v15M633 598v36M843.500 437v52M843.500 524v16M843.500 582v46M748 420.500h16M665 647h13M704 647h16" stroke-width="3"/>
            </g>
            <!-- Section mark -->
            <path d="M751.500 334v417M742 750.500h18M760.500 740v17M755 748.500h5v4h-5z" fill="none" stroke="#000"/>
            <path d="M742 334.500h19M760.500 328v18M755 332.500h5v4h-5z" fill="none" stroke="#2020b0"/>
            <!-- Axis heads -->
            <g class="heads" shape-rendering="auto">
              <circle cx="400" cy="415" r="9"/><circle cx="400" cy="504" r="9"/><circle cx="400" cy="559" r="9"/><circle cx="400" cy="646" r="9"/><circle cx="400" cy="675" r="9"/>
              <circle cx="517" cy="798" r="9"/><circle cx="558" cy="798" r="9"/><circle cx="633" cy="798" r="9"/><circle cx="680" cy="798" r="9"/><circle cx="733" cy="798" r="9"/><circle cx="742" cy="798" r="9"/><circle cx="779" cy="798" r="9"/><circle cx="832" cy="798" r="9"/><circle cx="849" cy="798" r="9"/>
              <circle cx="697" cy="489" r="9"/>
              <path d="M1124 360l2.500-3 2.500 3-2.500 3z"/>
            </g>
            <rect x="692" y="485" width="10" height="8" fill="#fff"/>
            <g class="marks">
              <text x="397" y="418">Д</text><text x="397" y="507">Г</text><text x="397" y="562">В</text><text x="397" y="649">Б</text><text x="397" y="678">А</text>
              <text x="514" y="801">1</text><text x="555" y="801">2</text><text x="630" y="801">3</text><text x="677" y="801">4</text><text x="729" y="801">5</text><text x="740" y="801">6</text><text x="776" y="801">7</text><text x="829" y="801">8</text><text x="846" y="801">9</text>
            </g>
            <g class="section-no">
              <text x="755" y="331">4</text><text x="745" y="763">4</text>
            </g>
            <g class="labels">
              <text x="608" y="464">ОК-4</text><text x="608" y="534">ОК-1</text><text x="608" y="617">ОК-5</text><text x="747" y="410">ОК-1</text>
              <text x="850" y="464">ОК-8</text><text x="850" y="534">ОК-1</text><text x="850" y="607">ОК-7</text><text x="662" y="659">ОК-6</text><text x="704" y="659">ОК-1</text>
              <text x="649" y="437">Комната</text><text x="651" y="444">отдыха</text><text x="701" y="437">Сауна</text><text x="713" y="467">Душ</text><text x="755" y="434">Л.М.</text>
              <text x="795" y="450">Спальня</text><text x="648" y="526">С/у</text><text x="713" y="526">Холл</text><text x="806" y="526">Гарде-</text><text x="811" y="533">роб</text>
              <text x="647" y="598">Гостевая</text><text x="709" y="593">С/у</text><text x="778" y="598">Спальня</text><text x="693" y="492">36</text>
              <text x="690" y="451">Д-4</text><text x="691" y="477">Д-4</text><text x="668" y="484">Д-4</text><text x="686" y="518">Д-4</text><text x="781" y="507">Д-4</text>
              <text x="679" y="538">Д-5</text><text x="777" y="538">Д-5</text><text x="681" y="561">Д-5</text><text x="753" y="567">Д-5</text><text x="743" y="635">Д-4</text>
            </g>
            <text class="plan-title" x="637" y="322">План второго&#160; этажа</text>
            <!-- Room legend -->
            <text class="legend-title" x="962" y="389">Легенда помещений</text>
            <g stroke="#000">
              <rect x="962.500" y="403.500" width="17" height="16" fill="#a060e0"/>
              <rect x="962.500" y="425.500" width="17" height="16" fill="#a0e060"/>
              <rect x="962.500" y="446.500" width="17" height="16" fill="#404040"/>
              <rect x="962.500" y="468.500" width="17" height="16" fill="#4340c0"/>
              <rect x="962.500" y="490.500" width="17" height="16" fill="#20e060"/>
              <rect x="962.500" y="511.500" width="17" height="16" fill="#98b898"/>
              <rect x="962.500" y="533.500" width="17" height="16" fill="#d0c8b4"/>
              <rect x="962.500" y="555.500" width="17" height="16" fill="#60e0e0"/>
              <rect x="962.500" y="576.500" width="17" height="16" fill="#2060e0"/>
              <rect x="962.500" y="598.500" width="17" height="16" fill="#e0d870"/>
            </g>
            <g class="legend">
              <text x="983" y="414">Гарде- роб</text>
              <text x="983" y="436">Гостевая</text>
              <text x="983" y="457">Душ</text>
              <text x="983" y="479">Комната&#160; отдыха</text>
              <text x="983" y="501">Л.М.</text>
              <text x="983" y="522">Помещение</text>
              <text x="983" y="544">С/у</text>
              <text x="983" y="566">Сауна</text>
              <text x="983" y="587">Спальня</text>
              <text x="983" y="609">Холл</text>
            </g>
          </svg>

          <div class="mdi-buttons">
            <button aria-label="Свернуть вид"><svg class="icon-sm" viewBox="0 0 12 12"><path d="M.5 6.500h11v3H.5z"/></svg></button>
            <button aria-label="Развернуть вид"><svg class="icon-sm" viewBox="0 0 12 12"><path d="M3.500 2.500v-2h8v8h-2M.5 2.500h9v9h-9zM3.500 5.500h3v3h-3z"/></svg></button>
            <button aria-label="Закрыть вид"><svg class="icon-sm" viewBox="0 0 12 12"><path d="M.5 1.500h3L6 4l2.500-2.500h3L8 6l3.500 4.500h-3L6 8l-2.500 2.500h-3L4 6z"/></svg></button>
          </div>

          <div class="navbar">
            <button class="nav-dot" aria-label="Закрыть навигацию"><svg viewBox="0 0 10 10"><circle cx="5" cy="5" r="4"/><path d="M3 3l4 4M7 3L3 7"/></svg></button>
            <button class="nav-wheel" aria-label="Штурвал 2D"><svg viewBox="0 0 26 26"><path d="M2 11Q2 2 11 2h7q3 0 3 3v6q0 9-9 10Q2 20 2 11z"/><circle cx="11" cy="11" r="5"/><path d="M7 15l-3 3M15 7l4-4"/></svg><b>2D</b></button>
            <i class="caret"></i>
            <hr>
            <button class="nav-zoom" aria-label="Показать все"><svg viewBox="0 0 18 18"><path d="M1 1h11v11H1z" fill="#a9cf9c" stroke="#7fa877"/><circle cx="11" cy="11" r="4" fill="#eef4f8"/><path d="M14 14l3 3" stroke-width="2"/></svg></button>
            <i class="caret"></i>
            <button class="nav-dot last" aria-label="Параметры навигации"><svg viewBox="0 0 10 10"><circle cx="5" cy="5" r="4"/><path d="M2 5h6"/></svg></button>
          </div>
        </div>
        <div class="scroll-v"><i class="up"></i><i class="thumb"></i><i class="down"></i></div>
      </div>
      <div class="view-bar">
        <button class="scale">1 : 100</button>
        <div class="view-tools">
          <button aria-label="Уровень детализации"><svg class="icon"><use href="#detail"/></svg></button>
          <button aria-label="Визуальный стиль"><svg class="icon"><use href="#box"/></svg></button>
          <button aria-label="Солнце"><svg class="icon"><use href="#sun"/></svg></button>
          <button aria-label="Тени"><svg class="icon"><use href="#shadow"/></svg></button>
          <button aria-label="Обрезать вид"><svg class="icon"><use href="#cropx"/></svg></button>
          <button aria-label="Граница обрезки"><svg class="icon"><use href="#croplamp"/></svg></button>
          <button aria-label="Временное скрытие"><svg class="icon"><use href="#glasses"/></svg></button>
          <button aria-label="Скрытые элементы"><svg class="icon"><use href="#lamp"/></svg></button>
          <button aria-label="Шаблон вида"><svg class="icon"><use href="#template"/></svg></button>
          <button aria-label="Аналитическая модель"><svg class="icon"><use href="#analytic"/></svg></button>
          <button aria-label="Зависимости"><svg class="icon"><use href="#lockdim"/></svg></button>
        </div>
        <div class="scroll-h"><i class="left"></i><i class="thumb"></i><i class="right"></i></div>
        <span class="grip"></span>
      </div>
    </section>
  </main>

  <!-- Status bar -->
  <footer class="status">
    <span class="hint">Щелчок - выбор, TAB - варианты, CTRL - добавление, SHIF</span>
    <button class="st-btn" aria-label="Рабочие наборы"><svg class="icon"><use href="#workset"/></svg></button>
    <label class="combo combo-set"><select disabled aria-label="Рабочий набор"><option></option></select><i class="caret"></i></label>
    <button class="st-btn requests"><svg class="icon"><use href="#editreq"/></svg><span>:0</span></button>
    <button class="st-btn" aria-label="Варианты конструкции"><svg class="icon"><use href="#options"/></svg></button>
    <button class="st-btn" aria-label="Добавить в набор" disabled><svg class="icon"><use href="#addopt"/></svg></button>
    <label class="combo combo-model"><select disabled aria-label="Вариант"><option>Главная модель</option></select><i class="caret"></i></label>
    <div class="select-tools">
      <button aria-label="Выбор связей"><svg class="icon"><use href="#links"/></svg></button>
      <button aria-label="Выбор подложки"><svg class="icon"><use href="#underlay"/></svg></button>
      <button aria-label="Выбор прикрепленных"><svg class="icon"><use href="#pinned"/></svg></button>
      <button aria-label="Выбор по граням"><svg class="icon"><use href="#faces"/></svg></button>
    </div>
  </footer>

</body>
</html>
```

FILE: styles.css
```css
* {
  box-sizing: border-box;
}

body {
  margin: 0;
  height: 100vh;
  display: flex;
  flex-direction: column;
  overflow: hidden;
  background: #e4e4e4;
  color: #222;
  font-family: "Open Sans", "Noto Sans", sans-serif;
  font-size: 11px;
  line-height: 16px;
}

button {
  font: inherit;
  color: inherit;
  background: none;
  border: 0;
  padding: 0;
  display: flex;
  align-items: center;
}

h1, h2 {
  margin: 0;
  font-size: 11px;
  font-weight: normal;
}

.sprite {
  position: absolute;
  width: 0;
  height: 0;
}

.icon,
.icon-lg,
.cursor,
.logo {
  flex: none;
  fill: none;
  stroke: #38424e;
}

.icon {
  width: 16px;
  height: 16px;
}

/* Small triangles */
.caret {
  width: 0;
  height: 0;
  flex: none;
  border: 3px solid transparent;
  border-top-color: #444;
  border-bottom: 0;
}

.caret.wide {
  display: inline-block;
  border-width: 5px 4px 0;
  margin-left: 3px;
  vertical-align: 1px;
}

.caret-right {
  border: 4px solid transparent;
  border-left: 5px solid #333;
  border-right: 0;
}

/* Title bar */
.titlebar {
  position: relative;
  height: 24px;
  flex: none;
  display: flex;
  color: #000;
  background:
    radial-gradient(circle at 111px 27px, transparent 10px, #a8506c 13px, #a8506c 16px, transparent 20px),
    linear-gradient(90deg, #3c86a8 40px, #7fb2cc 70px, #a8c4dc 140px, #5fa4dc 168px, #d4dde8 190px, #e4eaf2 400px, #cddaea 560px, #9dbadd 700px);
}

.app-button {
  position: absolute;
  z-index: 2;
  left: 0;
  top: 0;
  width: 41px;
  height: 41px;
  padding-left: 5px;
  gap: 2px;
  border: 1px solid #222;
  background: linear-gradient(#d8d8d8, #8c8c8c);
}

.logo {
  width: 22px;
  height: 28px;
}

.app-title {
  flex: 1;
  padding: 4px 0 0 177px;
  display: flex;
  gap: 18px;
  white-space: nowrap;
}

.infocenter {
  display: flex;
  align-items: center;
  width: 456px;
  background: linear-gradient(#efefef, #b8b8b8);
  border-bottom: 1px solid #999;
}

.info-toggle {
  width: 14px;
  justify-content: center;
}

.search {
  width: 179px;
  height: 21px;
  border: 1px solid #111;
  padding: 0 2px;
  font: italic 11px "Open Sans", sans-serif;
}

.search::placeholder {
  color: #777;
}

.info-btn {
  width: 24px;
  justify-content: center;
}

.user-btn {
  margin-left: 4px;
  gap: 5px;
  width: 113px;
}

.user-btn .caret {
  margin-left: auto;
}

.exchange {
  margin-left: 5px;
}

.help-btn {
  margin-left: 6px;
  padding-left: 8px;
  gap: 7px;
  border-left: 1px solid #bbb;
}

.window-buttons {
  width: 121px;
  padding: 0 4px 5px 17px;
  display: flex;
  background: linear-gradient(90deg, #5f86ba, #a9c4e4 70%, #86a8d0);
}

.window-buttons button {
  justify-content: center;
  border: 1px solid #4c5f7c;
  border-top: 0;
  width: 27px;
  background: linear-gradient(#c8d4e6 45%, #8fa6c6 50%, #a9bdd8);
}

.win-min {
  border-radius: 0 0 0 5px;
}

.win-min i {
  width: 11px;
  height: 4px;
  margin-top: 4px;
  background: #fff;
  border: 1px solid #667;
}

.win-max i {
  width: 10px;
  height: 9px;
  border: 2px solid #fff;
  outline: 1px solid #667;
}

.window-buttons .win-close {
  flex: 1;
  border-radius: 0 0 5px 0;
  background: linear-gradient(#e09080, #c83830 50%, #d81c24);
  color: #fff;
  font-weight: bold;
}

/* Tabs */
.tabs {
  height: 21px;
  flex: none;
  display: flex;
  padding: 3px 0 0 46px;
  background: #999;
}

.tabs a {
  padding: 0 11px;
  line-height: 17px;
  color: #222;
  text-decoration: none;
  white-space: nowrap;
}

.tabs .active {
  padding: 0 9px;
  background: #f2f2f2;
}

.ribbon-toggle {
  margin-left: 20px;
  gap: 5px;
}

.pill {
  width: 15px;
  height: 9px;
  border: 1px solid #333;
  border-radius: 3px;
  background: radial-gradient(circle, #333 2px, #fff 3px);
}

/* Ribbon */
.ribbon {
  flex: none;
  height: 95px;
  display: flex;
  gap: 2px;
  padding: 0 12px 2px 3px;
  background: linear-gradient(#d8d8d8, #bcbcbc);
}

.panel {
  display: flex;
  flex-direction: column;
  background: #fff;
  color: #333;
}

.panel h2 {
  height: 18px;
  line-height: 18px;
  text-align: center;
  white-space: nowrap;
  background: #eee;
  border-top: 1px solid #ddd;
}

.panel-body {
  height: 75px;
  display: grid;
}

.panel button {
  white-space: nowrap;
}

.col {
  padding-top: 2px;
}

.col button {
  height: 24px;
  gap: 5px;
}

.col .caret {
  margin-left: 4px;
}

.panel .big {
  flex-direction: column;
  text-align: center;
  padding-top: 4px;
}

.icon-lg {
  width: 30px;
  height: 32px;
  margin-bottom: 4px;
}

.big .caret {
  margin-top: 3px;
}

.cursor {
  width: 16px;
  height: 22px;
  margin: 5px 0 9px;
}

.panel .modify {
  height: 73px;
  margin: 1px 2px 1px 1px;
  border: 1px solid #2a6cb4;
  background: linear-gradient(#c4dff6, #a4cdf2);
}

.p-select { width: 63px; }
.p-build { width: 465px; }
.p-move { width: 114px; }
.p-model { width: 129px; }
.p-rooms { width: 209px; }
.p-opening { width: 105px; }
.p-datum { width: 50px; }
.p-plane { flex: 1; }

.p-build .panel-body {
  padding-left: 5px;
  grid-template-columns: 46px 47px 105px 111px auto;
}

.p-build .col:nth-child(3) {
  margin-left: 1px;
}

.p-move .panel-body,
.p-model .panel-body {
  padding-left: 6px;
}

.p-rooms .panel-body {
  padding-left: 6px;
  grid-template-columns: 169px auto;
}

.p-opening .panel-body {
  grid-template-columns: 40px 37px auto;
  column-gap: 3px;
}

.p-datum .panel-body {
  justify-content: center;
  align-content: center;
}

.p-plane .panel-body {
  padding-left: 14px;
  grid-template-columns: 56px auto;
}

/* Quick access toolbar */
.toolbar {
  flex: none;
  height: 24px;
  display: flex;
  padding-left: 5px;
  border-top: 1px solid #888;
  border-bottom: 1px solid #777;
  background: linear-gradient(#eee, #bfbfbf);
}

.toolbar button {
  width: 24px;
  padding-left: 4px;
  gap: 6px;
}

.toolbar .drop {
  width: 36px;
}

.toolbar hr {
  width: 1px;
  margin: 1px 3px;
  border: 0;
  background: #aaa;
}

/* Workspace */
.workspace {
  flex: 1;
  min-height: 0;
  display: flex;
  gap: 4px;
  padding-top: 26px;
  background: #e4e4e4;
}

/* Project browser */
.browser {
  width: 278px;
  flex: none;
  display: flex;
  flex-direction: column;
  background: #f0f0f0;
  color: #000;
}

.browser-title {
  display: flex;
  justify-content: space-between;
  height: 19px;
  padding: 0 5px 0 4px;
  background: #bfcddb;
  color: #444;
  white-space: nowrap;
}

.browser-title h2 {
  line-height: 20px;
}

.browser-title button {
  color: #000;
  font-weight: bold;
}

.browser-frame {
  flex: 1;
  min-height: 0;
  display: flex;
  flex-direction: column;
  margin: 2px 1px 2px 0;
  padding: 2px 4px 1px 3px;
  border: 1px solid #999;
  border-left: 0;
}

.tree-area {
  flex: 1;
  min-height: 0;
  display: flex;
  border: 1px solid #777;
  border-width: 1px 0 0 1px;
}

.tree {
  flex: 1;
  overflow: hidden;
  background: #fff;
}

.tree,
.tree ul {
  margin: 0;
  padding: 0;
  list-style: none;
}

.tree li {
  position: relative;
  min-height: 4px;
}

.tree ul {
  padding-left: 20px;
}

/* Dotted guides: vertical trunk and horizontal branch */
.tree li::before {
  content: "";
  position: absolute;
  left: 9px;
  top: 0;
  bottom: 0;
  border-left: 1px dotted #888;
}

.tree li:last-child::before {
  bottom: auto;
  height: 10px;
}

.row {
  position: relative;
  display: flex;
  align-items: center;
  height: 18px;
  padding-left: 24px;
}

.row.pic {
  padding-left: 21px;
}

.row::before {
  content: "";
  position: absolute;
  left: 10px;
  top: 10px;
  width: 14px;
  border-top: 1px dotted #888;
}

.row.pic::before {
  width: 11px;
}

.row span {
  padding: 0 3px;
  line-height: 18px;
  white-space: nowrap;
}

.row .icon {
  margin-right: 3px;
}

.row .selected {
  background: #e2e2e2;
}

.exp {
  position: absolute;
  z-index: 1;
  left: 5px;
  top: 6px;
  width: 9px;
  height: 9px;
  border: 1px solid #8a94a4;
  background: linear-gradient(#335, #335) center / 5px 1px no-repeat #f4f6fa;
}

.exp.plus {
  background:
    linear-gradient(#335, #335) center / 5px 1px no-repeat,
    linear-gradient(#335, #335) center / 1px 5px no-repeat #f4f6fa;
}

/* Scroll bars */
.scroll-v,
.scroll-h {
  flex: none;
  display: flex;
  align-items: center;
  background: #e9f0f9;
}

.scroll-v {
  width: 16px;
  flex-direction: column;
}

.scroll-h {
  height: 18px;
}

.up, .down, .left, .right {
  border: 4px solid transparent;
}

.up {
  border-top: 0;
  border-bottom-color: #333;
}

.down {
  border-bottom: 0;
  border-top-color: #333;
  margin-top: auto;
}

.left {
  border-left: 0;
  border-right-color: #333;
}

.right {
  border-right: 0;
  border-left-color: #333;
  margin-left: auto;
}

.thumb {
  border: 1px solid #9aa8b8;
  border-radius: 1px;
  background: linear-gradient(90deg, #f6f8fb, #cdd6e2);
}

.browser .scroll-v {
  padding: 6px 0 4px;
}

.browser .scroll-v .thumb {
  width: 15px;
  height: 65%;
  margin-top: 146px;
  background:
    repeating-linear-gradient(#888 0 1px, transparent 1px 2px) center / 7px 8px no-repeat,
    linear-gradient(90deg, #f6f8fb, #cdd6e2);
}

.browser .scroll-h {
  height: 17px;
  padding: 0 23px 0 7px;
}

.browser .scroll-h .thumb {
  width: 125px;
  height: 15px;
  margin-left: 8px;
  background:
    repeating-linear-gradient(90deg, #888 0 1px, transparent 1px 2px) center / 8px 7px no-repeat,
    linear-gradient(#f6f8fb, #cdd6e2);
}

.browser-tabs {
  display: flex;
  height: 24px;
  padding-bottom: 3px;
  border-top: 1px solid #111;
  white-space: nowrap;
}

.browser-tabs button {
  padding: 0 8px;
  border-right: 1px solid #222;
  border-bottom: 1px solid #666;
}

.browser-tabs .current {
  padding: 0 6px;
  margin-top: -1px;
  background: #f0f0f0;
}

/* Drawing view */
.view {
  flex: 1;
  min-width: 0;
  display: flex;
  flex-direction: column;
  border: 1px solid #555;
  border-width: 2px 0 0 1px;
  background: #f0f0f0;
}

.canvas-row {
  flex: 1;
  min-height: 0;
  display: flex;
}

.canvas {
  flex: 1;
  position: relative;
  overflow: hidden;
  background: #fff;
}

.drawing {
  display: block;
}

.drawing text {
  font-family: "Liberation Sans", Arial, sans-serif;
  fill: #000;
}

.heads {
  fill: none;
  stroke: #000;
}

.marks text {
  font-size: 7px;
  font-weight: bold;
}

.section-no text {
  font-size: 5px;
}

.labels text {
  font-size: 7px;
}

.drawing .plan-title {
  font-size: 16px;
  font-weight: bold;
  fill: #1010c8;
}

.drawing .legend-title {
  font-size: 15px;
}

.legend text {
  font-size: 10px;
}

.mdi-buttons {
  position: absolute;
  right: 4px;
  top: 7px;
  display: flex;
  gap: 6px;
}

.icon-sm {
  width: 12px;
  height: 12px;
  fill: #fff;
  stroke: #333;
}

.navbar {
  position: absolute;
  right: 1px;
  top: 28px;
  width: 36px;
  height: 118px;
  display: flex;
  flex-direction: column;
  align-items: center;
  border: 2px solid #c4c4c4;
  border-radius: 6px;
  background: #f4f4f4;
}

.navbar svg {
  fill: none;
  stroke: #9aa4ae;
}

.navbar .caret {
  border-top-color: #999;
}

.nav-dot {
  align-self: flex-end;
}

.nav-dot svg {
  width: 10px;
  height: 10px;
}

.nav-dot.last {
  margin-top: auto;
}

.nav-wheel {
  position: relative;
  margin: 8px 4px 4px 0;
}

.nav-wheel svg {
  width: 24px;
  height: 24px;
}

.nav-wheel b {
  position: absolute;
  right: -5px;
  bottom: -3px;
  font-size: 10px;
  line-height: 12px;
  font-weight: 600;
  color: #6f9cc8;
}

.navbar hr {
  width: 26px;
  margin: 4px 0 8px;
  border: 0;
  border-top: 1px solid #c0c0c0;
}

.nav-zoom svg {
  width: 18px;
  height: 18px;
}

.nav-zoom {
  margin-bottom: 8px;
}

.view .scroll-v {
  padding: 7px 0 5px;
}

.view .scroll-v .thumb {
  width: 14px;
  height: 14px;
  margin: auto 0 0;
}

.view-bar {
  flex: none;
  display: flex;
  height: 19px;
  align-items: center;
}

.scale {
  width: 78px;
  padding-left: 24px;
  color: #111;
}

.view-tools {
  display: flex;
  gap: 5px;
}

.view-bar .scroll-h {
  flex: 1;
  margin-left: 7px;
  padding: 0 8px 0 4px;
}

.view-bar .thumb {
  width: 15px;
  height: 16px;
  margin-left: auto;
}

.grip {
  width: 16px;
  height: 16px;
  background: radial-gradient(circle, #aaa 1px, transparent 1px) right bottom / 4px 4px;
  clip-path: polygon(100% 20%, 100% 100%, 20% 100%);
}

/* Status bar */
.status {
  flex: none;
  height: 25px;
  display: flex;
  align-items: center;
  padding-right: 8px;
  border-top: 1px solid #888;
  border-bottom: 1px solid #111;
  background: linear-gradient(#e4e4e4, #bcbcbc);
  color: #000;
}

.hint {
  width: 326px;
  padding-left: 2px;
  overflow: hidden;
  white-space: nowrap;
}

.st-btn {
  width: 26px;
  height: 22px;
  justify-content: center;
}

.requests {
  width: 56px;
  gap: 5px;
  justify-content: flex-start;
  padding-left: 7px;
  background: #d0d0d0;
}

.combo {
  position: relative;
  height: 20px;
  background: #f6f6f6;
  border: 1px solid #ccc;
}

.combo select {
  appearance: none;
  width: 100%;
  height: 18px;
  padding: 0 3px;
  border: 0;
  background: none;
  font: inherit;
  color: #888;
  opacity: 1;
}

.combo .caret {
  position: absolute;
  right: 4px;
  top: 8px;
  border-width: 4px 4px 0;
  border-top-color: #999;
}

.combo-set {
  width: 206px;
  margin-left: 3px;
}

.combo-model {
  width: 157px;
  margin-left: 1px;
}

.select-tools {
  margin-left: auto;
  display: flex;
  gap: 10px;
}
```
